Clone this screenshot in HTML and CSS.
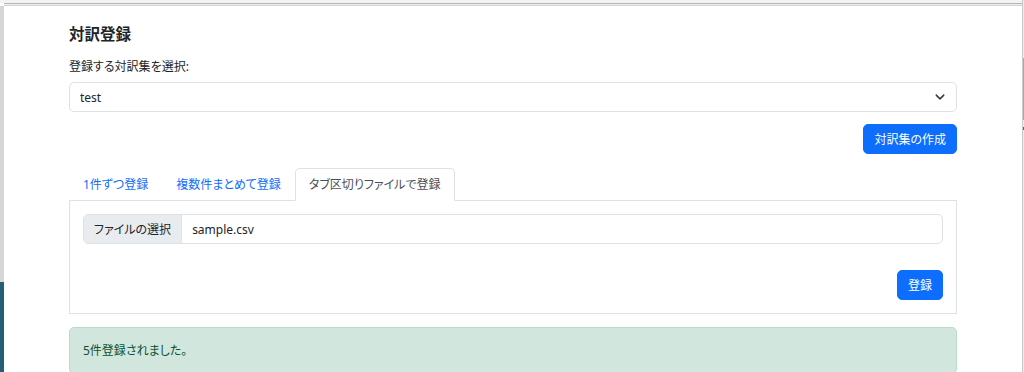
FILE: index.html
```html
<!DOCTYPE html>
<html lang="ja">
<head>
    <meta charset="UTF-8">
    <meta name="viewport" content="width=device-width, initial-scale=1.0">
    <title>対訳登録</title>
    <link rel="stylesheet" href="styles.css">
</head>
<body>
    <div class="window">
        <div class="edge-left"></div>

        <div class="main">
            <div class="container">
                <h5 class="title">対訳登録</h5>

                <label class="form-label">登録する対訳集を選択:</label>
                <div class="select">
                    <span>test</span>
                    <svg width="10" height="8" viewBox="0 2 16 12"><path d="m2 5 6 6 6-6" fill="none" stroke="#343a40" stroke-width="2.4" stroke-linecap="round" stroke-linejoin="round"/></svg>
                </div>

                <div class="actions">
                    <button class="btn">対訳集の作成</button>
                </div>

                <div class="nav-tabs">
                    <a href="#" class="tab">1件ずつ登録</a>
                    <a href="#" class="tab">複数件まとめて登録</a>
                    <a href="#" class="tab active">タブ区切りファイルで登録</a>
                </div>

                <div class="tab-content">
                    <div class="input-group">
                        <span class="input-group-text">ファイルの選択</span>
                        <span class="file-name">sample.csv</span>
                    </div>
                    <div class="actions submit">
                        <button class="btn">登録</button>
                    </div>
                </div>

                <div class="alert">5件登録されました。</div>
            </div>
        </div>

        <div class="edge-right">
            <div class="bg-yellow"></div>
            <div class="bg-dot"></div>
        </div>
    </div>
</body>
</html>
```

FILE: styles.css
```css
/* Global styles */
* {
    margin: 0;
    padding: 0;
    box-sizing: border-box;
}

body {
    font-family: "Segoe UI", "Noto Sans", "Noto Sans CJK JP", sans-serif;
    font-feature-settings: "palt";
    font-size: 12px;
    line-height: 19px;
    color: #212529;
    background-color: #fff;
    overflow: hidden;
}

.window {
    display: flex;
    height: 372px;
    border-top: 3px solid #f3f3f3;
}

/* Window edges */
.edge-left {
    width: 4px;
    margin-top: 3px;
    background: linear-gradient(#d6d6d6 0, #d6d6d6 276px, #245f74 276px);
}

.edge-right {
    width: 2px;
    margin-top: -3px;
    border-left: 1px solid #c9c9c9;
    background-color: #ececec;
    display: flex;
    flex-direction: column;
}

.bg-yellow {
    margin-top: 58px;
    height: 62px;
    background-color: #d9a441;
}

.bg-dot {
    margin-top: 7px;
    height: 3px;
    background-color: #7a5a3a;
}

.main {
    flex: 1;
    border-top: 1px solid #b5b5b5;
    box-shadow: inset 0 1px 0 #eeeeee, inset 0 2px 0 #d5d5d5;
    padding-top: 21px;
}

.container {
    width: 888px;
    margin: 0 auto;
}

.title {
    font-size: 15.5px;
    font-weight: 700;
    line-height: 19px;
    margin-bottom: 13px;
}

.form-label {
    display: block;
    margin-bottom: 6px;
}

/* Select */
.select {
    display: flex;
    justify-content: space-between;
    align-items: center;
    height: 30px;
    padding: 0 10px;
    border: 1px solid #dee2e6;
    border-radius: 5px;
}

.select svg {
    margin-right: 1px;
}

.actions {
    display: flex;
    justify-content: flex-end;
    margin-top: 12px;
}

.btn {
    font: inherit;
    color: #fff;
    background-color: #0d6efd;
    border: 1px solid #0d6efd;
    border-radius: 5px;
    height: 30px;
    padding: 0 10px;
    cursor: pointer;
}

/* Tabs */
.nav-tabs {
    display: flex;
    margin-top: 14px;
    border-bottom: 1px solid #dee2e6;
}

.tab {
    display: block;
    padding: 6px 13px;
    margin-bottom: -1px;
    color: #0d6efd;
    text-decoration: none;
    border: 1px solid transparent;
    border-radius: 5px 5px 0 0;
}

.tab.active {
    color: #495057;
    border-color: #dee2e6 #dee2e6 #fff;
    background-color: #fff;
}

.tab-content {
    border: 1px solid #dee2e6;
    border-top: none;
    padding: 13px;
}

.input-group {
    display: flex;
    height: 30px;
    border: 1px solid #dee2e6;
    border-radius: 5px;
    overflow: hidden;
}

.input-group-text {
    display: flex;
    align-items: center;
    padding: 0 10px;
    background-color: #e9ecef;
    border-right: 1px solid #dee2e6;
}

.file-name {
    display: flex;
    align-items: center;
    padding: 0 10px;
}

.actions.submit {
    margin-top: 26px;
}

/* Alert */
.alert {
    margin-top: 13px;
    padding: 13px;
    color: #0f5132;
    background-color: #d1e7dd;
    border: 1px solid #badbcc;
    border-radius: 5px;
}
```
